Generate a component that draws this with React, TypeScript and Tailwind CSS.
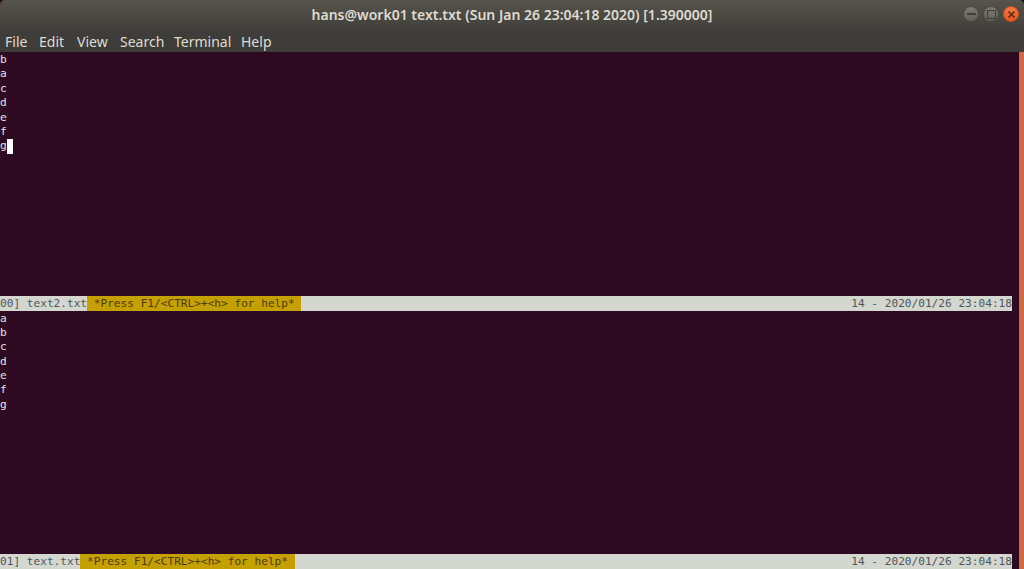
import React from "react";

const LINE = "h-[14.4px] leading-[14.4px]";

// one tmux style status line
const StatusBar = ({ left }: { left: string }) => (
    <div className="flex justify-between h-[15px] leading-[16px] bg-[#d3d7cf] text-[#50565c] whitespace-pre">
        <div className="flex">
            <span>{left}</span>
            <span className="bg-[#c4a000] text-[#4e3a00]"> *Press F1/&lt;CTRL&gt;+&lt;h&gt; for help* </span>
        </div>
        <span>14 - 2020/01/26 23:04:18</span>
    </div>
);

const Pane = ({ lines, cursor }: { lines: string[]; cursor?: boolean }) => (
    <div className="flex-1 pt-[1px] text-[#e6e6e2]">
        {lines.map((line, i) => (
            <div key={i} className={`flex ${LINE}`}>
                <span>{line}</span>
                {cursor && i === lines.length - 1 && <span className="w-[6.68px] bg-white" />}
            </div>
        ))}
    </div>
);

const WindowButton = ({ color, children }: { color: string; children: React.ReactNode }) => (
    <div className={`w-[16px] h-[16px] rounded-full border border-[#4a4943] flex items-center justify-center ${color}`}>
        {children}
    </div>
);

const App: React.FC = () => {
    return (
        <div className="w-[1024px] h-[569px] flex flex-col overflow-hidden bg-[#2d0922]">
            {/* Title bar */}
            <div className="relative h-[30px] flex items-center justify-center rounded-t-[5px] bg-gradient-to-b from-[#56544b] to-[#403f3a]">
                <span className="font-['Noto_Sans',sans-serif] font-semibold text-[14px] text-[#dfdbd2] translate-y-[-1px]">
                    hans@work01 text.txt (Sun Jan 26 23:04:18 2020) [1.390000]
                </span>
                <div className="absolute right-[5px] top-[6px] flex gap-[4px]">
                    <WindowButton color="bg-gradient-to-b from-[#7b7a73] to-[#62615b]">
                        <div className="w-[9px] h-[2px] bg-[#3e3d39]" />
                    </WindowButton>
                    <WindowButton color="bg-gradient-to-b from-[#7b7a73] to-[#62615b]">
                        <div className="w-[9px] h-[9px] border-[1.5px] border-[#3e3d39]" />
                    </WindowButton>
                    <WindowButton color="bg-gradient-to-b from-[#f47a3e] to-[#e9531f] border-[#c9501f]">
                        <svg width="9" height="9" viewBox="0 0 9 9" stroke="#5a2a16" strokeWidth="1.6">
                            <path d="M1.5 1.5l6 6M7.5 1.5l-6 6" />
                        </svg>
                    </WindowButton>
                </div>
            </div>

            {/* Menu bar */}
            <div className="h-[22px] flex items-center pl-[5px] bg-[#3e3d39] font-['Noto_Sans',sans-serif] text-[14px] text-[#dfdbd2]">
                <span className="w-[34px]">File</span>
                <span className="w-[38px]">Edit</span>
                <span className="w-[43px]">View</span>
                <span className="w-[54px]">Search</span>
                <span className="w-[67px]">Terminal</span>
                <span>Help</span>
            </div>

            {/* Terminal */}
            <div className="flex-1 flex min-h-0">
                <div className="w-[1012px] flex flex-col font-['DejaVu_Sans_Mono',monospace] text-[11.13px]">
                    <Pane lines={["b", "a", "c", "d", "e", "f", "g"]} cursor />
                    <StatusBar left="00] text2.txt" />
                    <Pane lines={["a", "b", "c", "d", "e", "f", "g"]} />
                    <StatusBar left="01] text.txt" />
                </div>
                <div className="w-[7px]" />
                <div className="w-[5px] bg-[#cf6a44]" />
            </div>
        </div>
    );
};

export default App;
